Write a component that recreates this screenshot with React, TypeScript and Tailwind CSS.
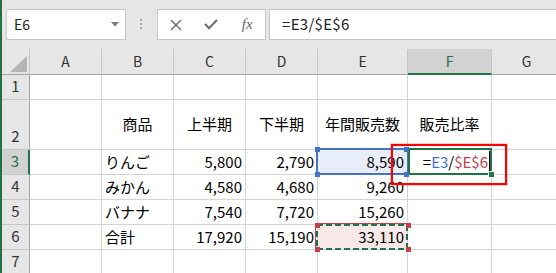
import clsx from "clsx";
import { twMerge } from "tailwind-merge";
import type { ReactNode } from "react";

const COLS = ["A", "B", "C", "D", "E", "F", "G"];
const COL_W = ["w-[72px]", "w-[72px]", "w-[72px]", "w-[72px]", "w-[90px]", "w-[84px]", "w-[70px]"];

const FONT = "font-['Noto_Sans_CJK_JP','Noto_Sans',sans-serif]";

function Cell({
  col,
  align = "left",
  className,
  children,
}: {
  col: number;
  align?: "left" | "right" | "center";
  className?: string;
  children?: ReactNode;
}) {
  return (
    <div
      className={twMerge(
        clsx(
          "relative flex h-full shrink-0 items-center border-b border-r border-[#d4d4d4] bg-white text-[15px] text-black",
          COL_W[col],
          align === "left" && "pl-[3px]",
          align === "right" && "justify-end pr-[3px]",
          align === "center" && "justify-center",
        ),
        className,
      )}
    >
      {children}
    </div>
  );
}

function RowHead({ n, active }: { n: number; active?: boolean }) {
  return (
    <div
      className={clsx(
        "flex h-full w-[28px] shrink-0 items-end justify-center border-b border-b-[#c6c6c6] pb-[3px] text-[15px] leading-[20px]",
        active
          ? "border-r-2 border-r-[#217346] bg-[#d2d2d2] text-[#217346]"
          : "border-r border-r-[#a6a6a6] bg-[#e6e6e6] text-[#333]",
      )}
    >
      {n}
    </div>
  );
}

function Handle({ className }: { className: string }) {
  return <div className={clsx("absolute z-10 h-[5px] w-[5px]", className)} />;
}

type DataRow = { n: number; name: string; h1: string; h2: string; total: string };

const data: DataRow[] = [
  { n: 4, name: "みかん", h1: "4,580", h2: "4,680", total: "9,260" },
  { n: 5, name: "バナナ", h1: "7,540", h2: "7,720", total: "15,260" },
];

function Toolbar() {
  return (
    <div className="flex h-[49px] shrink-0 items-start pt-[9px]">
      <div className="ml-[4px] flex h-[31px] w-[120px] items-center justify-between border border-[#c6c6c6] bg-white pl-[7px] pr-[6px]">
        <span className="text-[14px] text-[#222]">E6</span>
        <svg width="8" height="5" viewBox="0 0 8 5">
          <polygon points="0,0 8,0 4,4.5" fill="#7a7a7a" />
        </svg>
      </div>
      <div className="ml-[14px] mt-[10px] flex w-[2px] flex-col gap-[2px]">
        <span className="h-[2px] w-[2px] bg-[#a9a9a9]" />
        <span className="h-[2px] w-[2px] bg-[#a9a9a9]" />
        <span className="h-[2px] w-[2px] bg-[#a9a9a9]" />
      </div>
      <div className="ml-[15px] grid h-[31px] w-[109px] grid-cols-3 items-center border border-[#c6c6c6] bg-white">
        <div className="flex justify-center">
          <svg width="12" height="12" viewBox="0 0 12 12">
            <path d="M1 1 L11 11 M11 1 L1 11" stroke="#6e6e6e" strokeWidth="1.5" fill="none" />
          </svg>
        </div>
        <div className="flex justify-center">
          <svg width="14" height="11" viewBox="0 0 14 11">
            <path d="M1 5 L5 9.2 L13 1" stroke="#6e6e6e" strokeWidth="2.2" fill="none" />
          </svg>
        </div>
        <div className="flex justify-center">
          <span className="font-['Liberation_Serif',serif] text-[15px] italic leading-none text-[#666]">
            fx
          </span>
        </div>
      </div>
      <div className="ml-[3px] flex h-[31px] flex-1 items-center border-y border-l border-[#c6c6c6] bg-white pl-[12px]">
        <span className="text-[15px] tracking-[0.3px] text-[#222]">=E3/$E$6</span>
      </div>
    </div>
  );
}

function HeaderRow() {
  return (
    <div className="flex h-[26px] shrink-0">
      <div className="flex h-full w-[28px] shrink-0 items-end justify-end border-b border-r border-b-[#a6a6a6] border-r-[#c6c6c6] pb-[2px] pr-[2px]">
        <svg width="17" height="16" viewBox="0 0 17 16">
          <polygon points="17,0 17,16 0,16" fill="#b5b5b5" />
        </svg>
      </div>
      {COLS.map((c, i) => (
        <div
          key={c}
          className={clsx(
            "flex h-full shrink-0 items-center justify-center border-r border-r-[#c6c6c6] text-[14px]",
            COL_W[i],
            c === "F"
              ? "border-b-2 border-b-[#217346] bg-[#d2d2d2] text-[#217346]"
              : "border-b border-b-[#a6a6a6] text-[#333]",
          )}
        >
          {c}
        </div>
      ))}
    </div>
  );
}

export default function App() {
  return (
    <div className={clsx("flex h-[273px] w-[556px] overflow-hidden bg-[#e6e6e6]", FONT)}>
      <div className="w-[2px] shrink-0 bg-[#217346]" />
      <div className="flex min-w-0 flex-1 flex-col">
        <Toolbar />
        <HeaderRow />

        {/* row 1 */}
        <div className="flex h-[25px] shrink-0">
          <RowHead n={1} />
          {COLS.map((c, i) => (
            <Cell key={c} col={i} />
          ))}
        </div>

        {/* row 2: headings */}
        <div className="flex h-[50px] shrink-0">
          <RowHead n={2} />
          <Cell col={0} />
          <Cell col={1} align="center">商品</Cell>
          <Cell col={2} align="center">上半期</Cell>
          <Cell col={3} align="center">下半期</Cell>
          <Cell col={4} align="center">年間販売数</Cell>
          <Cell col={5} align="center">販売比率</Cell>
          <Cell col={6} />
        </div>

        {/* row 3: editing F3 */}
        <div className="flex h-[25px] shrink-0">
          <RowHead n={3} active />
          <Cell col={0} />
          <Cell col={1}>りんご</Cell>
          <Cell col={2} align="right">5,800</Cell>
          <Cell col={3} align="right">2,790</Cell>
          <Cell col={4} align="right" className="bg-[#e8eef9]">
            8,590
            <div className="absolute left-[-2px] top-[-2px] h-[27px] w-[93px] border-2 border-[#4472c4]" />
            <Handle className="left-[-3px] top-[-3px] bg-[#4472c4]" />
            <Handle className="left-[86px] top-[-3px] bg-[#4472c4]" />
            <Handle className="left-[-3px] top-[22px] bg-[#4472c4]" />
            <Handle className="left-[86px] top-[22px] bg-[#4472c4]" />
          </Cell>
          <Cell col={5} align="right" className="pr-[1px]">
            <span>
              =<span className="text-[#4472c4]">E3</span>/<span className="text-[#c43e4c]">$E$6</span>
            </span>
            <span className="ml-[1px] h-[22px] w-px bg-black" />
            <div className="absolute left-0 top-[-2px] h-[27px] w-[84px] border-2 border-[#217346]" />
            <div className="absolute left-[80px] top-[21px] z-10 h-[7px] w-[7px] border border-white bg-[#217346]" />
            <div className="absolute left-[-17px] top-[-6px] z-20 h-[41px] w-[116px] border-2 border-[#ff0000] shadow-[0_0_0_1px_rgba(255,0,0,0.2)]" />
          </Cell>
          <Cell col={6} />
        </div>

        {data.map((r) => (
          <div key={r.n} className="flex h-[25px] shrink-0">
            <RowHead n={r.n} />
            <Cell col={0} />
            <Cell col={1}>{r.name}</Cell>
            <Cell col={2} align="right">{r.h1}</Cell>
            <Cell col={3} align="right">{r.h2}</Cell>
            <Cell col={4} align="right">{r.total}</Cell>
            <Cell col={5} />
            <Cell col={6} />
          </div>
        ))}

        {/* row 6: totals, E6 referenced */}
        <div className="flex h-[25px] shrink-0">
          <RowHead n={6} />
          <Cell col={0} />
          <Cell col={1}>合計</Cell>
          <Cell col={2} align="right">17,920</Cell>
          <Cell col={3} align="right">15,190</Cell>
          <Cell col={4} align="right" className="bg-[#f9e8e8]">
            33,110
            <div className="absolute left-[-3px] top-[-2px] h-[28px] w-[94px] border border-[#c43e4c]">
              <svg width="92" height="26" className="block">
                <rect x="1" y="1" width="90" height="24" fill="none" stroke="#217346" strokeWidth="2" strokeDasharray="6 3" />
              </svg>
            </div>
            <Handle className="left-[-3px] top-[-2px] bg-[#c43e4c]" />
            <Handle className="left-[88px] top-[-2px] bg-[#c43e4c]" />
            <Handle className="left-[-3px] top-[22px] bg-[#c43e4c]" />
            <Handle className="left-[88px] top-[22px] bg-[#c43e4c]" />
          </Cell>
          <Cell col={5} />
          <Cell col={6} />
        </div>

        {/* row 7 */}
        <div className="flex h-[25px] shrink-0">
          <RowHead n={7} />
          {COLS.map((c, i) => (
            <Cell key={c} col={i} />
          ))}
        </div>
      </div>
    </div>
  );
}
